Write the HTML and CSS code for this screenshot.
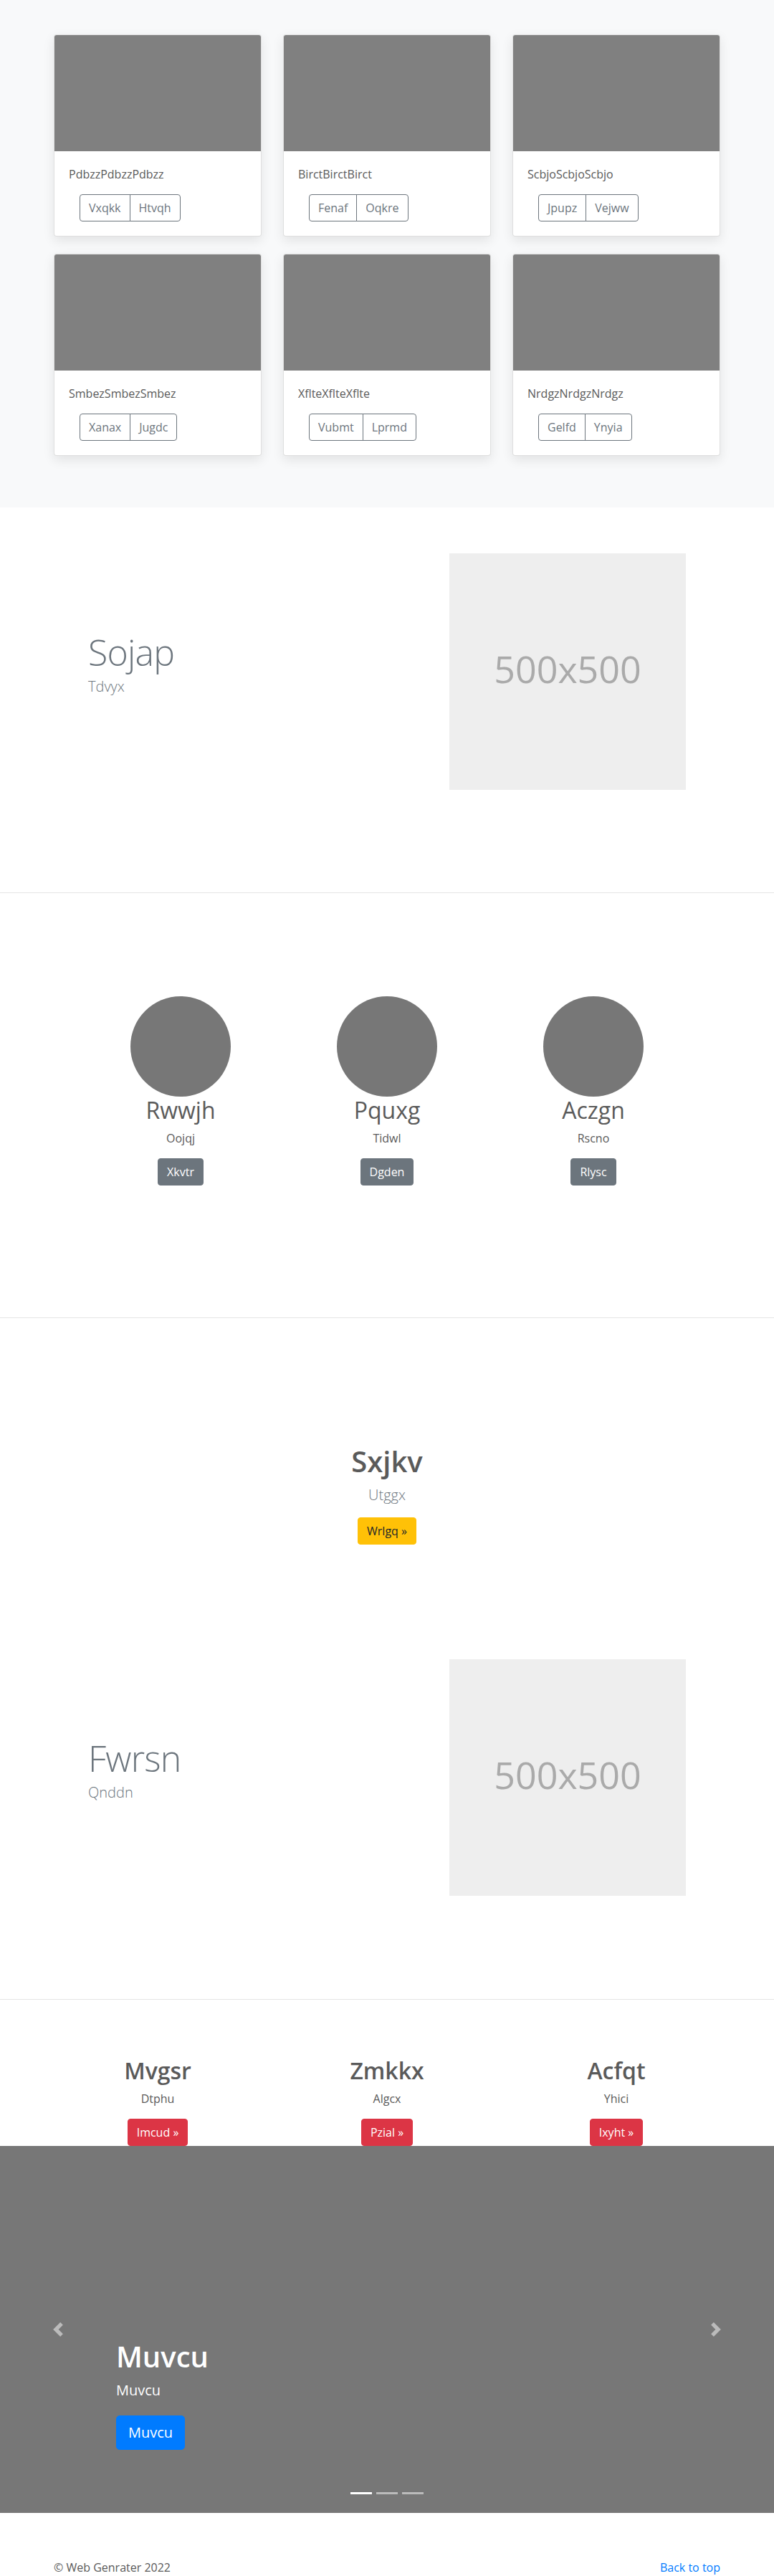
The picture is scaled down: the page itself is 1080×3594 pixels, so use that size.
FILE: index.html
```html
<!DOCTYPE html>
<html lang="en">
<head>
<meta charset="utf-8">
<title>Web Genrater</title>
<link rel="stylesheet" href="styles.css">
</head>
<body>
<main>
  <section class="album">
    <div class="album-grid">
      <div class="card">
        <div class="card-img"></div>
        <div class="card-body">
          <p class="card-text">PdbzzPdbzzPdbzz</p>
          <div class="btn-group"><a class="btn-outline">Vxqkk</a><a class="btn-outline">Htvqh</a></div>
        </div>
      </div>
      <div class="card">
        <div class="card-img"></div>
        <div class="card-body">
          <p class="card-text">BirctBirctBirct</p>
          <div class="btn-group"><a class="btn-outline">Fenaf</a><a class="btn-outline">Oqkre</a></div>
        </div>
      </div>
      <div class="card">
        <div class="card-img"></div>
        <div class="card-body">
          <p class="card-text">ScbjoScbjoScbjo</p>
          <div class="btn-group"><a class="btn-outline">Jpupz</a><a class="btn-outline">Vejww</a></div>
        </div>
      </div>
      <div class="card">
        <div class="card-img"></div>
        <div class="card-body">
          <p class="card-text">SmbezSmbezSmbez</p>
          <div class="btn-group"><a class="btn-outline">Xanax</a><a class="btn-outline">Jugdc</a></div>
        </div>
      </div>
      <div class="card">
        <div class="card-img"></div>
        <div class="card-body">
          <p class="card-text">XflteXflteXflte</p>
          <div class="btn-group"><a class="btn-outline">Vubmt</a><a class="btn-outline">Lprmd</a></div>
        </div>
      </div>
      <div class="card">
        <div class="card-img"></div>
        <div class="card-body">
          <p class="card-text">NrdgzNrdgzNrdgz</p>
          <div class="btn-group"><a class="btn-outline">Gelfd</a><a class="btn-outline">Ynyia</a></div>
        </div>
      </div>
    </div>
  </section>

  <section class="featurette featurette-first">
    <div class="feat-row">
      <div class="feat-text">
        <h2 class="feat-heading">Sojap</h2>
        <p class="lead muted">Tdvyx</p>
      </div>
      <div class="placeholder">500x500</div>
    </div>
  </section>
  <div class="divider"></div>

  <section class="marketing">
    <div class="marketing-grid">
      <div class="mk-col">
        <div class="circle"></div>
        <h2 class="mk-title">Rwwjh</h2>
        <p class="mk-text">Oojqj</p>
        <p class="mk-action"><a class="btn btn-secondary">Xkvtr</a></p>
      </div>
      <div class="mk-col">
        <div class="circle"></div>
        <h2 class="mk-title">Pquxg</h2>
        <p class="mk-text">Tidwl</p>
        <p class="mk-action"><a class="btn btn-secondary">Dgden</a></p>
      </div>
      <div class="mk-col">
        <div class="circle"></div>
        <h2 class="mk-title">Aczgn</h2>
        <p class="mk-text">Rscno</p>
        <p class="mk-action"><a class="btn btn-secondary">Rlysc</a></p>
      </div>
    </div>
  </section>
  <div class="divider"></div>

  <section class="hero">
    <h1 class="hero-title">Sxjkv</h1>
    <p class="lead muted hero-lead">Utggx</p>
    <p class="hero-action"><a class="btn btn-warning">Wrlgq »</a></p>
  </section>

  <section class="featurette featurette-second">
    <div class="feat-row">
      <div class="feat-text">
        <h2 class="feat-heading">Fwrsn</h2>
        <p class="lead muted">Qnddn</p>
      </div>
      <div class="placeholder">500x500</div>
    </div>
  </section>
  <div class="divider"></div>

  <section class="marketing2">
    <div class="marketing2-grid">
      <div class="mk2-col">
        <h2 class="mk2-title">Mvgsr</h2>
        <p class="mk-text">Dtphu</p>
        <a class="btn btn-danger">Imcud »</a>
      </div>
      <div class="mk2-col">
        <h2 class="mk2-title">Zmkkx</h2>
        <p class="mk-text">Algcx</p>
        <a class="btn btn-danger">Pzial »</a>
      </div>
      <div class="mk2-col">
        <h2 class="mk2-title">Acfqt</h2>
        <p class="mk-text">Yhici</p>
        <a class="btn btn-danger">Ixyht »</a>
      </div>
    </div>
  </section>

  <section class="carousel">
    <a class="carousel-control control-prev" aria-label="Previous">
      <svg width="20" height="20" viewBox="0 0 8 8"><path fill="#fff" d="M5.25 0l-4 4 4 4 1.5-1.5L4.25 4l2.5-2.5L5.25 0z"/></svg>
    </a>
    <a class="carousel-control control-next" aria-label="Next">
      <svg width="20" height="20" viewBox="0 0 8 8"><path fill="#fff" d="M2.75 0l-1.5 1.5L3.75 4l-2.5 2.5L2.75 8l4-4-4-4z"/></svg>
    </a>
    <div class="carousel-caption">
      <h1 class="caption-title">Muvcu</h1>
      <p class="caption-text">Muvcu</p>
      <p class="caption-action"><a class="btn btn-lg btn-primary">Muvcu</a></p>
    </div>
    <ol class="indicators">
      <li class="active"></li>
      <li></li>
      <li></li>
    </ol>
  </section>
</main>

<footer class="footer">
  <p class="back-top"><a>Back to top</a></p>
  <p class="copy">© Web Genrater 2022</p>
</footer>
</body>
</html>
```

FILE: styles.css
```css
* { box-sizing: border-box; }

html, body {
  margin: 0;
  padding: 0;
}

body {
  font-family: "Open Sans", "Noto Sans", "Liberation Sans", sans-serif;
  font-size: 16px;
  line-height: 1.5;
  color: #5a5a5a;
  background: #fff;
}

h1, h2, p { margin: 0; }

a { text-decoration: none; }

/* ---------- Album ---------- */
.album {
  background: #f8f9fa;
  padding: 48px 0 72px;
}

.album-grid {
  width: 930px;
  margin: 0 auto;
  display: grid;
  grid-template-columns: repeat(3, 290px);
  column-gap: 30px;
  row-gap: 24px;
}

.card {
  background: #fff;
  border: 1px solid rgba(0, 0, 0, .125);
  border-radius: 4px;
  box-shadow: 0 .35rem 1rem rgba(0, 0, 0, .09);
  overflow: hidden;
}

.card-img {
  width: 100%;
  aspect-ratio: 16 / 9;
  background: #808080;
}

.card-body {
  padding: 20px;
}

.card-text {
  margin-bottom: 16px;
  color: #5a5a5a;
}

.btn-group {
  display: inline-flex;
  margin-left: 15px;
}

.btn-outline {
  display: inline-block;
  padding: 6px 12px;
  font-size: 16px;
  line-height: 24px;
  color: #6c757d;
  border: 1px solid #6c757d;
}

.btn-outline:first-child {
  border-radius: 4px 0 0 4px;
}

.btn-outline + .btn-outline {
  margin-left: -1px;
  border-radius: 0 4px 4px 0;
}

/* ---------- Buttons ---------- */
.btn {
  display: inline-block;
  padding: 6px 12px;
  font-size: 16px;
  line-height: 24px;
  border: 1px solid transparent;
  border-radius: 4px;
}

.btn-secondary { background: #6c757d; border-color: #6c757d; color: #fff; }
.btn-warning { background: #ffc107; border-color: #ffc107; color: #212529; }
.btn-danger { background: #dc3545; border-color: #dc3545; color: #fff; }
.btn-primary { background: #007bff; border-color: #007bff; color: #fff; }

.btn-lg {
  padding: 8px 16px;
  font-size: 20px;
  line-height: 30px;
  border-radius: 5px;
}

/* ---------- Featurettes ---------- */
.featurette-first { padding: 64px 0 143px; }
.featurette-second { padding: 0 0 144px; }

.feat-row {
  width: 834px;
  margin: 0 auto;
  display: flex;
  align-items: center;
  gap: 30px;
}

.feat-text {
  flex: 1;
}

.feat-heading {
  font-size: 50px;
  font-weight: 300;
  line-height: 1;
  letter-spacing: -0.8px;
  color: #6c757d;
  margin-bottom: 8px;
}

.lead {
  font-size: 20px;
  font-weight: 300;
  line-height: 30px;
  margin-bottom: 16px;
}

.muted { color: #6c757d; }

.placeholder {
  width: 330px;
  height: 330px;
  flex: none;
  background: #eee;
  color: #aaa;
  font-size: 52px;
  display: flex;
  align-items: center;
  justify-content: center;
  padding-bottom: 8px;
}

.divider {
  height: 1px;
  background: #e5e5e5;
}

/* ---------- Marketing ---------- */
.marketing { padding: 144px 0 184px; }

.marketing-grid {
  width: 864px;
  margin: 0 auto;
  display: grid;
  grid-template-columns: repeat(3, 1fr);
  text-align: center;
}

.circle {
  width: 140px;
  height: 140px;
  border-radius: 50%;
  background: #777;
  margin: 0 auto;
}

.mk-title {
  font-size: 32px;
  font-weight: 400;
  line-height: 38px;
  margin-bottom: 8px;
  color: #5a5a5a;
}

.mk-text {
  margin-bottom: 16px;
}

/* ---------- Hero ---------- */
.hero {
  padding: 176px 0 160px;
  text-align: center;
}

.hero-title {
  font-size: 40px;
  font-weight: 600;
  line-height: 48px;
  margin-bottom: 8px;
  color: #5a5a5a;
}

/* ---------- Marketing 2 ---------- */
.marketing2 { padding: 80px 0 0; }

.marketing2-grid {
  width: 960px;
  margin: 0 auto;
  display: grid;
  grid-template-columns: repeat(3, 1fr);
  text-align: center;
}

.mk2-title {
  font-size: 32px;
  font-weight: 600;
  line-height: 38px;
  margin-bottom: 8px;
  color: #5a5a5a;
}

/* ---------- Carousel ---------- */
.carousel {
  position: relative;
  height: 512px;
  background: #777;
}

.carousel-control {
  position: absolute;
  top: 0;
  bottom: 0;
  width: 15%;
  display: flex;
  align-items: center;
  justify-content: center;
  opacity: .5;
}

.control-prev { left: 0; }
.control-next { right: 0; }

.carousel-caption {
  position: absolute;
  left: 15%;
  right: 15%;
  bottom: 48px;
  padding: 20px 0;
  color: #fff;
  text-align: left;
}

.caption-title {
  font-size: 40px;
  font-weight: 600;
  line-height: 48px;
  margin-bottom: 8px;
}

.caption-text {
  font-size: 20px;
  line-height: 30px;
  margin-bottom: 20px;
}

.caption-action { margin-bottom: 20px; }

.indicators {
  position: absolute;
  left: 0;
  right: 0;
  bottom: 26px;
  margin: 0;
  padding: 0;
  list-style: none;
  display: flex;
  justify-content: center;
}

.indicators li {
  width: 30px;
  height: 3px;
  margin: 0 3px;
  background: #fff;
  opacity: .5;
}

.indicators li.active { opacity: 1; }

/* ---------- Footer ---------- */
.footer {
  width: 930px;
  margin: 0 auto;
  padding-top: 64px;
  height: 88px;
  overflow: hidden;
}

.back-top {
  float: right;
}

.back-top a { color: #007bff; }

.copy { color: #5a5a5a; }
```
